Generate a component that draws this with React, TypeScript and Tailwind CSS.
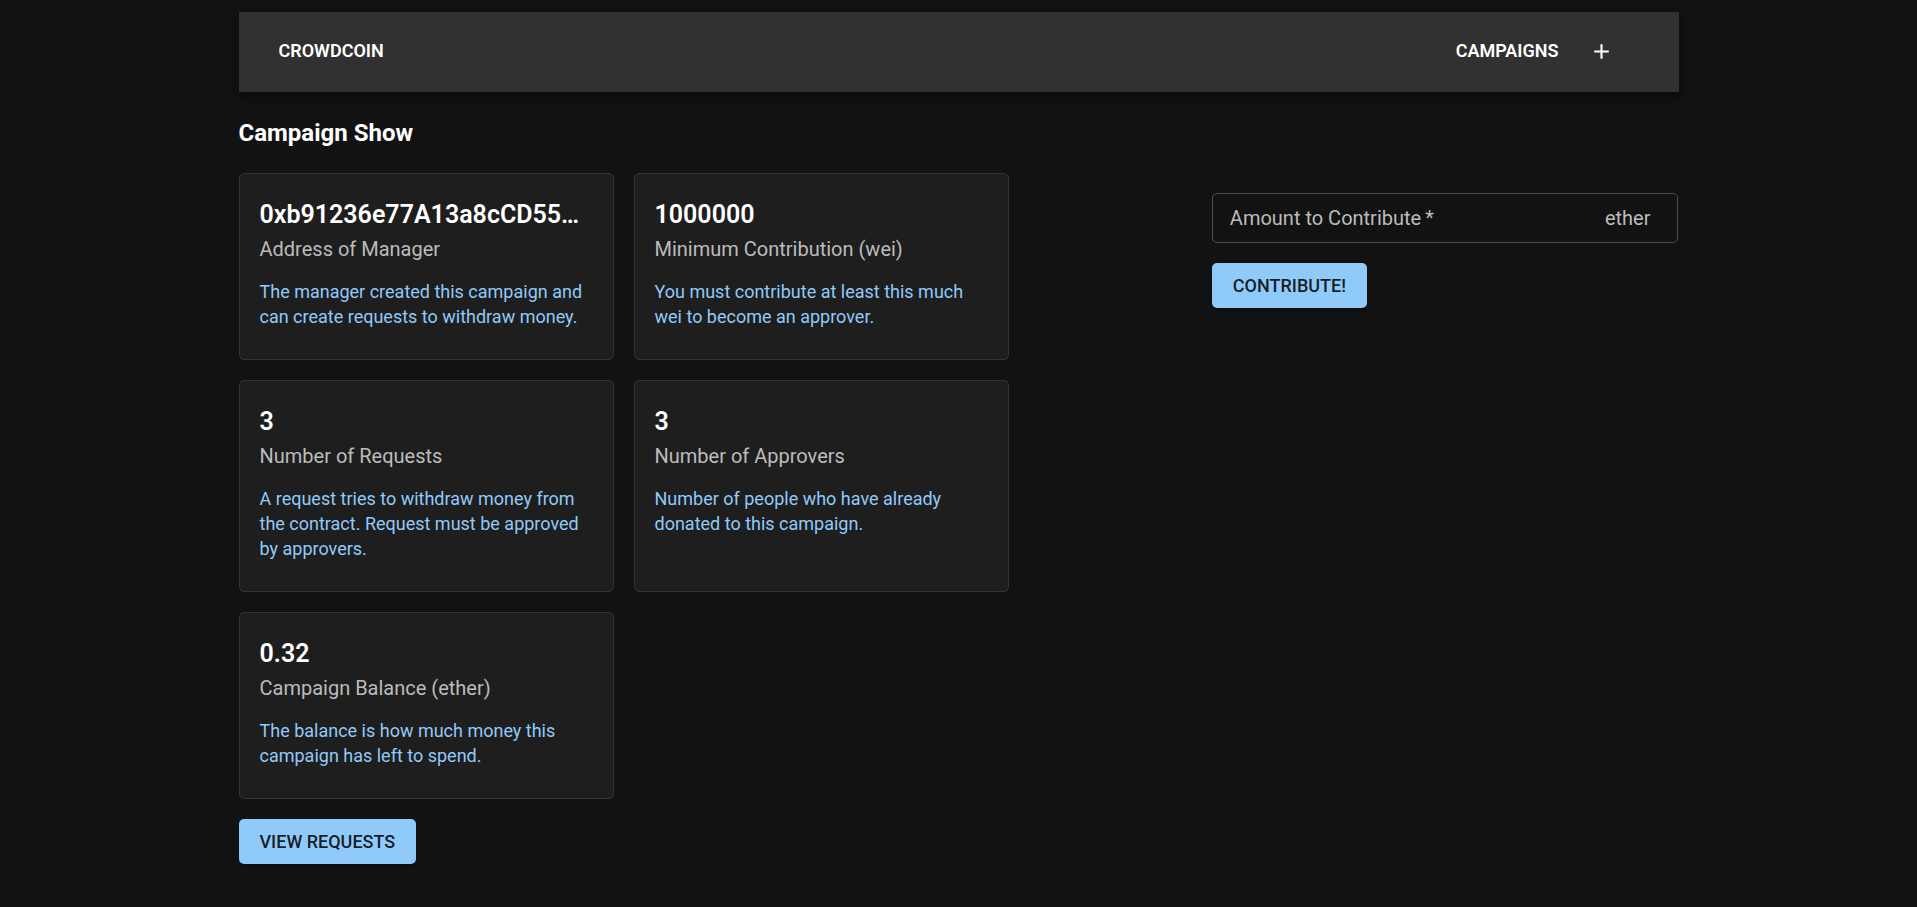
type Stat = { value: string; label: string; description: string };

const stats: Stat[] = [
  {
    value: "0xb91236e77A13a8cCD55…",
    label: "Address of Manager",
    description: "The manager created this campaign and can create requests to withdraw money.",
  },
  {
    value: "1000000",
    label: "Minimum Contribution (wei)",
    description: "You must contribute at least this much wei to become an approver.",
  },
  {
    value: "3",
    label: "Number of Requests",
    description: "A request tries to withdraw money from the contract. Request must be approved by approvers.",
  },
  {
    value: "3",
    label: "Number of Approvers",
    description: "Number of people who have already donated to this campaign.",
  },
  {
    value: "0.32",
    label: "Campaign Balance (ether)",
    description: "The balance is how much money this campaign has left to spend.",
  },
];

const buttonClass =
  "rounded-[5px] bg-[#90caf9] px-[21px] py-2.5 text-lg leading-[25px] font-medium text-black/87 uppercase shadow-[0_2px_3px_rgba(0,0,0,0.3)] hover:bg-[#42a5f5]";

function StatCard({ value, label, description }: Stat) {
  return (
    <article className="w-[375px] max-w-full rounded-[5px] border border-[#343434] bg-[#1e1e1e] px-5 pt-[22px] pb-[30px]">
      <h2 className="truncate text-[25px] leading-[38px] font-semibold">{value}</h2>
      <p className="mb-[15px] text-xl leading-[30px] text-[#bcbcbc]">{label}</p>
      <p className="text-lg leading-[25px] text-[#90caf9]">{description}</p>
    </article>
  );
}

export default function App() {
  return (
    <div className="min-h-screen bg-[#121212] px-8 pt-3 pb-10 font-[Roboto,sans-serif] text-white">
      <div className="mx-auto max-w-[1440px]">
        <header className="flex h-20 items-center justify-between bg-[#313131] pr-[65px] pb-0.5 pl-10 text-lg font-semibold shadow-[0_3px_5px_-1px_rgba(0,0,0,0.2),0_5px_6px_rgba(0,0,0,0.14),0_1px_12px_rgba(0,0,0,0.12)]">
          <a href="#home">CROWDCOIN</a>
          <nav className="flex items-center gap-[30px]" aria-label="Main">
            <a href="#campaigns">CAMPAIGNS</a>
            <a href="#new" aria-label="New campaign">
              <svg viewBox="0 0 24 24" className="size-[25px] fill-current" aria-hidden="true">
                <path d="M19 13h-6v6h-2v-6H5v-2h6V5h2v6h6v2z" />
              </svg>
            </a>
          </nav>
        </header>

        <h1 className="mt-[27px] mb-[26px] text-2xl leading-7 font-bold">Campaign Show</h1>

        <main className="grid grid-cols-1 gap-5 lg:grid-cols-12">
          <section className="lg:col-span-8">
            <div className="flex flex-wrap gap-5">
              {stats.map((stat) => (
                <StatCard key={stat.label} {...stat} />
              ))}
            </div>
            <button type="button" className={`mt-5 ${buttonClass}`}>
              View Requests
            </button>
          </section>

          <form className="pt-5 lg:col-span-4" onSubmit={(event) => event.preventDefault()}>
            <div className="flex items-center rounded-[5px] border border-[#4d4d4d] pr-[27px] pl-[17px] text-xl leading-7 text-[#bcbcbc] focus-within:border-[#90caf9]">
              <input
                id="amount"
                type="text"
                required
                aria-label="Amount to Contribute"
                placeholder={"Amount to Contribute\u2009*"}
                className="min-w-0 flex-1 bg-transparent py-2.5 text-white outline-none placeholder:text-[#bcbcbc]"
              />
              <label htmlFor="amount">ether</label>
            </div>
            <button type="submit" className={`mt-5 ${buttonClass}`}>
              Contribute!
            </button>
          </form>
        </main>
      </div>
    </div>
  );
}
